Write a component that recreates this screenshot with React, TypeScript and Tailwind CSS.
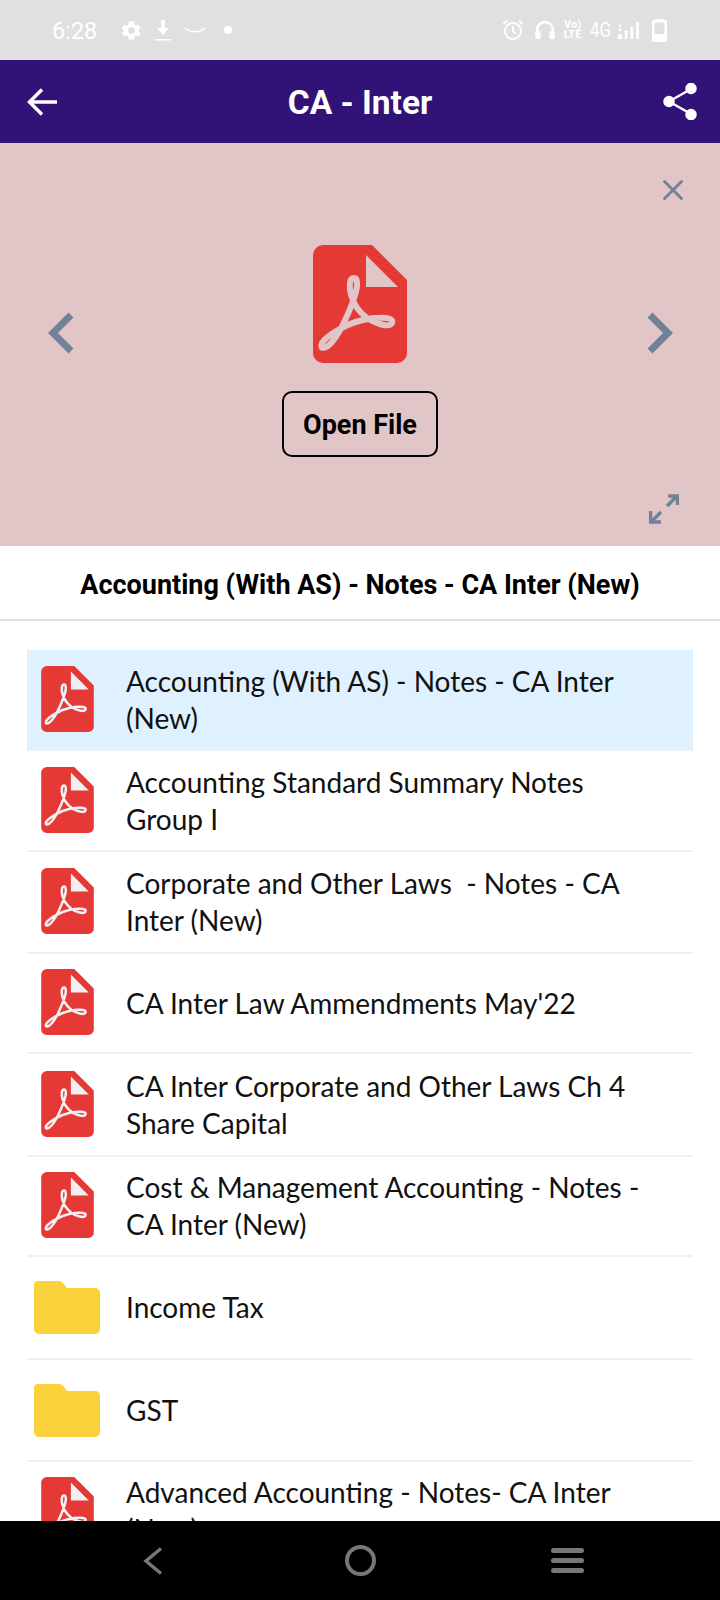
import { X } from 'lucide-react';

const PdfIcon = ({ className, accent, stroke }: { className: string; accent: string; stroke: string }) => (
  <svg viewBox="0 0 94 118" className={className}>
    <path
      d="M10 0H59L94 35V108A10 10 0 0 1 84 118H10A10 10 0 0 1 0 108V10A10 10 0 0 1 10 0Z"
      fill="#e53935"
    />
    <path d="M53 10V42H85Z" fill={accent} />
    <path
      d="M41 33C36 33 36 42 38 50C41 60 47 68 54 73C60 77 76 84 79 78C82 71 62 72 50 75C35 78 14 90 9 98C6 105 13 104 19 97C29 86 44 50 44 40C44 36 44 33 41 33Z"
      fill="none"
      stroke={accent}
      strokeWidth={stroke}
    />
  </svg>
);

const FolderIcon = () => (
  <svg viewBox="0 0 66 53" className="w-[66px] h-[53px] ml-[7px] shrink-0">
    <path
      d="M4 0H25C27 0 28 1 29 2L33 7H61A5 5 0 0 1 66 12V48A5 5 0 0 1 61 53H5A5 5 0 0 1 0 48V4A4 4 0 0 1 4 0Z"
      fill="#fbd13b"
    />
  </svg>
);

const Chevron = ({ flip }: { flip?: boolean }) => (
  <svg
    viewBox="0 0 26 42"
    className={`w-[26px] h-[42px] -mt-[24px] ${flip ? '-scale-x-100' : ''}`}
    fill="none"
    stroke="currentColor"
    strokeWidth="7"
  >
    <path d="M3 3L21 21L3 39" />
  </svg>
);

const StatusBar = () => (
  <div className="relative h-[60px] bg-[#e0e0e0] flex items-center text-white shrink-0">
    <span className="ml-[52px] w-[68px] pt-[3px] text-[23.500px] font-[Roboto,sans-serif]">6:28</span>
    <svg viewBox="0 0 24 24" className="w-[23px] h-[23px] mr-[12px]" fill="white">
      <path d="M19.4 13a7.5 7.5 0 0 0 0-2l2.1-1.6-2-3.5-2.5 1a7.5 7.5 0 0 0-1.7-1L15 2.500h-6l-.4 3.400a7.5 7.5 0 0 0-1.700 1l-2.500-1-3 3.500 2.100 1.600a7.5 7.500 0 0 0 0 2l-2.100 1.600 3 3.500 2.500-1a7.500 7.500 0 0 0 1.700 1l.4 3.400h6l.4-3.400a7.500 7.500 0 0 0 1.700-1l2.500 1 2-3.500zM12 15.500a3.500 3.500 0 1 1 0-7 3.500 3.500 0 0 1 0 7z" />
    </svg>
    <svg viewBox="0 0 16 21" className="w-[16px] h-[21px] mr-[13px]" fill="white">
      <path d="M6 0h4v8h4l-6 7-6-7h4z" />
      <rect x="0" y="19" width="16" height="1.500" />
    </svg>
    <svg viewBox="0 0 22 8" className="w-[22px] h-[8px] mr-[18px]" fill="none" stroke="white" strokeWidth="1.500">
      <path d="M1 2C7 7 15 7 21 2" />
    </svg>
    <div className="w-[8px] h-[8px] rounded-full bg-white" />

    <div className="ml-auto mr-[52px] flex items-center">
      <svg viewBox="0 0 22 22" className="w-[22px] h-[22px] mr-[11px]" fill="none" stroke="white" strokeWidth="2">
        <circle cx="11" cy="12" r="8" />
        <path d="M11 7.500V12.500L14 14.500M1.500 5L5 1.500M20.500 5L17 1.500" />
      </svg>
      <svg viewBox="0 0 20 20" className="w-[20px] h-[20px] mr-[8px]" fill="none" stroke="white" strokeWidth="2.500">
        <path d="M2 15V10A8 8 0 0 1 18 10V15" />
        <rect x="0.500" y="11" width="5" height="8" fill="white" stroke="none" rx="1.500" />
        <rect x="14.500" y="11" width="5" height="8" fill="white" stroke="none" rx="1.500" />
      </svg>
      <div className="w-[19px] mr-[8px] flex flex-col items-center text-[11px] leading-[10px] font-bold font-[Roboto,sans-serif]">
        <span>Vo)</span>
        <span>LTE</span>
      </div>
      <span className="w-[27px] text-[20px] font-[Roboto,sans-serif] scale-x-85 origin-left">4G</span>
      <svg viewBox="0 0 22 20" className="w-[23px] h-[19px] mr-[12px]" fill="white">
        <path d="M0 6L2 3L4 6ZM0 8L2 11L4 8Z" />
        <rect x="0" y="14" width="4" height="5" />
        <rect x="7" y="10" width="3" height="9" />
        <rect x="13" y="6" width="3" height="13" />
        <rect x="19" y="1" width="3" height="18" />
      </svg>
      <svg viewBox="0 0 15 24" className="w-[15px] h-[24px] mr-[1px]">
        <path
          fillRule="evenodd"
          d="M4 2V1H11V2H13A2 2 0 0 1 15 4V22A2 2 0 0 1 13 24H2A2 2 0 0 1 0 22V4A2 2 0 0 1 2 2ZM2.500 4.500V16H12.500V4.500Z"
          fill="white"
        />
      </svg>
    </div>
  </div>
);

const items = [
  { name: 'Accounting (With AS) - Notes - CA Inter (New)', h: 'h-[101px]', active: true },
  { name: 'Accounting Standard Summary Notes Group I', h: 'h-[101px]' },
  { name: 'Corporate and Other Laws  - Notes - CA Inter (New)', h: 'h-[102px]' },
  { name: "CA Inter Law Ammendments May'22", h: 'h-[100px]' },
  { name: 'CA Inter Corporate and Other Laws Ch 4 Share Capital', h: 'h-[103px]' },
  { name: 'Cost & Management Accounting - Notes - CA Inter (New)', h: 'h-[100px]' },
  { name: 'Income Tax', h: 'h-[103px]', folder: true },
  { name: 'GST', h: 'h-[102px]', folder: true },
  { name: 'Advanced Accounting - Notes- CA Inter (New)', h: 'h-[100px]' },
];

export default function App() {
  return (
    <div className="w-[720px] h-[1600px] flex flex-col overflow-hidden bg-white font-['Lato',sans-serif]">
      <StatusBar />

      <div className="h-[83px] bg-[#311377] flex items-center justify-between pl-[27px] pr-[23px] shrink-0 text-white">
        <svg viewBox="0 0 30 28" className="w-[30px] h-[28px] mt-[1px]" fill="none" stroke="white" strokeWidth="3.500">
          <path d="M15 1.500L2.500 14L15 26.500M2.500 14H30" />
        </svg>
        <h1 className="pt-[3px] text-[33.500px] font-bold font-[Roboto,sans-serif]">CA - Inter</h1>
        <svg viewBox="0 0 34 37" className="w-[34px] h-[37px]" fill="white" stroke="white" strokeWidth="2.500">
          <path d="M6 18.500L28 6M6 18.500L28 31" fill="none" />
          <circle cx="6" cy="18.500" r="4.500" />
          <circle cx="28" cy="5.500" r="4.500" />
          <circle cx="28" cy="31.500" r="4.500" />
        </svg>
      </div>

      <div className="relative h-[403px] bg-[#e2c5c7] flex items-center justify-between pl-[48px] pr-[47px] shrink-0 text-[#6f8296]">
        <Chevron flip />
        <div className="flex flex-col items-center mt-[13px] mr-[1px]">
          <PdfIcon className="w-[94px] h-[118px]" accent="#e2c5c7" stroke="6" />
          <button className="mt-[28px] w-[156px] h-[66px] pt-[3px] rounded-[10px] border-2 border-black text-black text-[27px] font-bold font-[Roboto,sans-serif]">
            Open File
          </button>
        </div>
        <Chevron />
        <X size={34} strokeWidth={2} className="absolute right-[30px] top-[30px]" />
        <svg viewBox="0 0 30 30" className="absolute left-[649px] top-[351px] w-[30px] h-[30px]" fill="none" stroke="currentColor" strokeWidth="3.500">
          <path d="M18 12L27 3M19 2H28.500V11M12 18L3 27M1.500 17V28H12" />
        </svg>
      </div>

      <div className="h-[75px] pt-[5px] border-b-2 border-[#dedede] flex items-center justify-center shrink-0">
        <p className="text-[27px] font-bold text-black font-[Roboto,sans-serif]">
          Accounting (With AS) - Notes - CA Inter (New)
        </p>
      </div>

      <div className="flex-1 min-h-0 overflow-hidden pt-[29px] px-[27px]">
        {items.map((item) => (
          <div
            key={item.name}
            className={`${item.h} flex items-center border-b-2 border-[#f0f0f0] ${item.active ? 'bg-[#dff0fe]' : ''}`}
          >
            {item.folder ? (
              <FolderIcon />
            ) : (
              <PdfIcon
                className="w-[53px] h-[66px] ml-[14px] -mt-[2px] shrink-0"
                accent={item.active ? '#e8f1fb' : '#f3eef2'}
                stroke="4.500"
              />
            )}
            <p
              className={`${item.folder ? 'ml-[26px]' : 'ml-[32px]'} w-[525px] text-[28px] leading-[37px] text-[#111] whitespace-pre-wrap`}
            >
              {item.name}
            </p>
          </div>
        ))}
      </div>

      <div className="relative z-10 h-[79px] bg-black flex items-center shrink-0">
        <svg viewBox="0 0 20 28" className="ml-[143px] w-[20px] h-[28px]" fill="none" stroke="#777" strokeWidth="3.500">
          <path d="M18 1.500L3 14L18 26.500" />
        </svg>
        <div className="ml-[182px] w-[31px] h-[31px] rounded-full border-4 border-[#777]" />
        <div className="ml-[175px] w-[33px] flex flex-col gap-[5px]">
          <div className="h-[5px] rounded-full bg-[#777]" />
          <div className="h-[5px] rounded-full bg-[#777]" />
          <div className="h-[5px] rounded-full bg-[#777]" />
        </div>
      </div>
    </div>
  );
}
